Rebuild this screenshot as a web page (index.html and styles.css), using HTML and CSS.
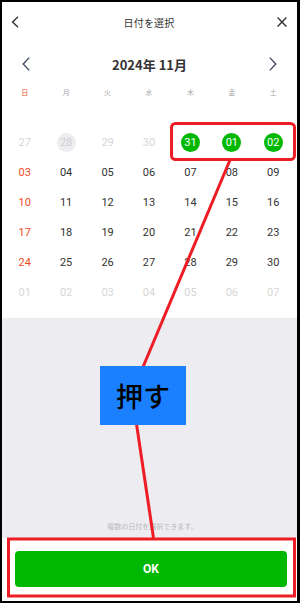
FILE: index.html
```html
<!DOCTYPE html>
<html lang="ja">
<head>
<meta charset="utf-8">
<link rel="stylesheet" href="styles.css">
</head>
<body>
<div class="screen">
  <section class="cal">
    <div class="topbar">
      <svg class="back" width="8" height="12" viewBox="0 0 8 12"><path d="M7 0.8 L1.6 6 L7 11.2" fill="none" stroke="#333" stroke-width="1.4"/></svg>
      <div class="title">日付を選択</div>
      <svg class="close" width="10" height="10" viewBox="0 0 10 10"><path d="M0.6 0.6 L9.4 9.4 M9.4 0.6 L0.6 9.4" fill="none" stroke="#333" stroke-width="1.4"/></svg>
    </div>
    <div class="monthbar">
      <svg class="prev" width="8" height="14" viewBox="0 0 8 14"><path d="M7.2 0.6 L1.2 7 L7.2 13.4" fill="none" stroke="#3b4262" stroke-width="1.3"/></svg>
      <div class="month">2024年 11月</div>
      <svg class="next" width="8" height="14" viewBox="0 0 8 14"><path d="M0.8 0.6 L6.8 7 L0.8 13.4" fill="none" stroke="#3b4262" stroke-width="1.3"/></svg>
    </div>
    <div class="week">
      <span class="sun">日</span><span>月</span><span>火</span><span>水</span><span>木</span><span>金</span><span>土</span>
    </div>
    <div class="days">
      <span class="d out">27</span><span class="d past"><i>28</i></span><span class="d out">29</span><span class="d out">30</span><span class="d sel"><i>31</i></span><span class="d sel"><i>01</i></span><span class="d sel"><i>02</i></span>
      <span class="d sun">03</span><span class="d">04</span><span class="d">05</span><span class="d">06</span><span class="d">07</span><span class="d">08</span><span class="d">09</span>
      <span class="d sun">10</span><span class="d">11</span><span class="d">12</span><span class="d">13</span><span class="d">14</span><span class="d">15</span><span class="d">16</span>
      <span class="d sun">17</span><span class="d">18</span><span class="d">19</span><span class="d">20</span><span class="d">21</span><span class="d">22</span><span class="d">23</span>
      <span class="d sun">24</span><span class="d">25</span><span class="d">26</span><span class="d">27</span><span class="d">28</span><span class="d">29</span><span class="d">30</span>
      <span class="d out">01</span><span class="d out">02</span><span class="d out">03</span><span class="d out">04</span><span class="d out">05</span><span class="d out">06</span><span class="d out">07</span>
    </div>
  </section>
  <section class="gray">
    <p class="note">複数の日付を選択できます。</p>
  </section>
  <section class="footer">
    <button class="ok">OK</button>
  </section>

  <svg class="marks" width="300" height="603" viewBox="0 0 300 603">
    <rect x="171.5" y="123.5" width="123" height="36" rx="4" fill="none" stroke="#ee1c25" stroke-width="3"/>
    <rect x="8.5" y="539" width="286" height="57" fill="none" stroke="#ee1c25" stroke-width="3"/>
    <line x1="230" y1="160" x2="143" y2="367" stroke="#ee1c25" stroke-width="3"/>
    <line x1="136.5" y1="424" x2="153.5" y2="538" stroke="#ee1c25" stroke-width="3"/>
  </svg>
  <div class="push">押す</div>
</div>
</body>
</html>
```
FILE: styles.css
```css
* { box-sizing: border-box; }
html, body { margin: 0; padding: 0; background: #fff; }
body { font-family: "Roboto", "Noto Sans CJK JP", sans-serif; }

.screen {
  position: relative;
  width: 300px;
  height: 603px;
  border: 2px solid #000;
  border-right-width: 3px;
  display: flex;
  flex-direction: column;
  background: #edecf1;
  overflow: hidden;
}

.cal {
  background: #fff;
  padding-bottom: 11px;
}

.topbar, .monthbar {
  display: grid;
  grid-template-columns: 1fr auto 1fr;
  align-items: center;
}
.topbar { height: 40px; padding: 0 10px 0 9px; }
.monthbar { height: 44px; padding: 0 20px 0 20px; }

.close, .next { justify-self: end; }

.title {
  font-family: "Noto Sans CJK JP", sans-serif;
  font-size: 10px;
  color: #333;
  letter-spacing: 0.2px;
}
.month {
  font-family: "Noto Sans CJK JP", sans-serif;
  font-size: 13px;
  font-weight: 700;
  color: #333;
}

.week, .days {
  display: grid;
  grid-template-columns: repeat(7, 1fr);
  margin: 0 3px 0 2px;
}
.week {
  height: 12px;
  align-items: center;
  margin-bottom: 29px;
}
.week span {
  text-align: center;
  font-family: "Noto Sans CJK JP", sans-serif;
  font-size: 7px;
  color: #aaa;
}
.week .sun { color: #f04a24; }

.days { grid-auto-rows: 30px; }
.d {
  display: flex;
  align-items: center;
  justify-content: center;
  font-size: 11px;
  color: #333;
}
.d.sun { color: #f04a24; }
.d.out { color: #d6d6d6; }
.d i {
  font-style: normal;
  width: 19px;
  height: 19px;
  border-radius: 50%;
  display: flex;
  align-items: center;
  justify-content: center;
}
.d.past i { background: #ededf0; color: #d0d0d0; }
.d.sel i { background: #00b800; color: #fff; }

.gray {
  flex: 1;
  display: flex;
  flex-direction: column;
  justify-content: flex-end;
  padding-bottom: 7px;
}
.note {
  margin: 0;
  text-align: center;
  font-family: "Noto Sans CJK JP", sans-serif;
  font-size: 7px;
  color: #b9b9bd;
  padding-left: 6px;
}

.footer {
  background: #fff;
  padding: 13px 10px 14px 13px;
}
.ok {
  display: block;
  width: 100%;
  height: 36px;
  border: 0;
  border-radius: 4px;
  background: #00b800;
  color: #fff;
  font-family: "Roboto", sans-serif;
  font-size: 12px;
  font-weight: 700;
}

.marks {
  position: absolute;
  left: -2px;
  top: -2px;
  pointer-events: none;
}
.push {
  position: absolute;
  left: 98px;
  top: 364px;
  width: 86px;
  height: 59px;
  background: #1a80ff;
  color: #000;
  font-family: "Noto Sans CJK JP", sans-serif;
  font-size: 27px;
  font-weight: 500;
  display: flex;
  align-items: center;
  justify-content: center;
}
```
